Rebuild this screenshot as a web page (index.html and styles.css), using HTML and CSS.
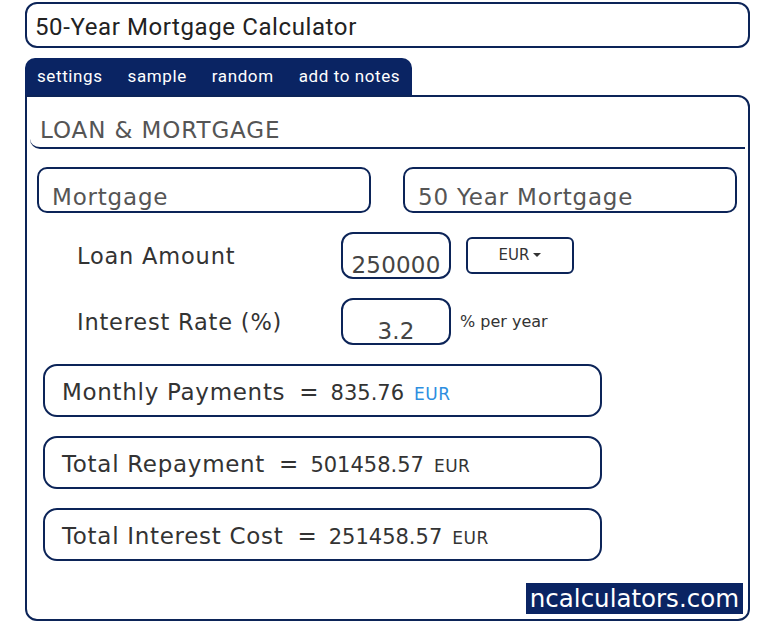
FILE: index.html
```html
<!DOCTYPE html>
<html>
<head>
  <meta charset="utf-8">
  <title>50-Year Mortgage Calculator</title>
  <link rel="stylesheet" href="styles.css">
</head>
<body>
  <div class="wrap">
    <div class="title">50-Year Mortgage Calculator</div>

    <div class="tabs">
      <span class="tab">settings</span>
      <span class="tab">sample</span>
      <span class="tab">random</span>
      <span class="tab">add to notes</span>
    </div>

    <div class="panel">
      <div class="heading">LOAN &amp; MORTGAGE</div>

      <div class="pick-row">
        <div class="pick">Mortgage</div>
        <div class="pick">50 Year Mortgage</div>
      </div>

      <div class="field">
        <div class="label">Loan Amount</div>
        <div class="input">250000</div>
        <div class="currency">EUR<span class="caret"></span></div>
      </div>

      <div class="field">
        <div class="label">Interest Rate (%)</div>
        <div class="input">3.2</div>
        <div class="unit">% per year</div>
      </div>

      <div class="result">
        <span>Monthly Payments</span><span class="eq">=</span><span class="val">835.76</span><span class="cur blue">EUR</span>
      </div>
      <div class="result">
        <span>Total Repayment</span><span class="eq">=</span><span class="val">501458.57</span><span class="cur">EUR</span>
      </div>
      <div class="result">
        <span>Total Interest Cost</span><span class="eq">=</span><span class="val">251458.57</span><span class="cur">EUR</span>
      </div>

      <div class="brand-row">
        <span class="brand">ncalculators.com</span>
      </div>
    </div>
  </div>
</body>
</html>
```

FILE: styles.css
```css
* {
  box-sizing: border-box;
}

body {
  margin: 0;
  background: #fff;
  font-family: "DejaVu Sans", Arial, sans-serif;
  color: #333;
}

.wrap {
  padding: 2px 20px 0 25px;
}

.title {
  height: 46px;
  border: 2px solid #0c2458;
  border-radius: 12px;
  padding: 0 8px;
  font-family: Roboto, Arial, sans-serif;
  font-size: 24px;
  letter-spacing: 0.6px;
  line-height: 46px;
  color: #222;
}

.tabs {
  display: inline-flex;
  margin-top: 10px;
  padding: 0 0 0 12px;
  height: 37px;
  background: #0a2463;
  border-radius: 10px 10px 0 0;
  font-family: Roboto, Arial, sans-serif;
  vertical-align: top;
}

.tab {
  color: #fff;
  font-size: 17px;
  letter-spacing: 0.6px;
  line-height: 37px;
  margin-right: 25px;
}

.tab:last-child {
  margin-right: 12px;
}

.panel {
  height: 526px;
  border: 2px solid #0c2458;
  border-radius: 0 12px 12px 12px;
}

.heading {
  margin: 0 3px;
  padding: 19px 0 2px 10px;
  height: 52px;
  font-size: 23px;
  letter-spacing: 0.9px;
  color: #555;
  line-height: 28px;
  border-bottom: 2px solid #0c2458;
  border-radius: 0 0 0 10px;
}

.pick-row {
  display: flex;
  gap: 32px;
  margin: 18px 11px 0 10px;
}

.pick {
  flex: 1;
  height: 46px;
  border: 2px solid #0c2458;
  border-radius: 10px;
  padding: 0 13px;
  font-size: 23px;
  letter-spacing: 0.8px;
  color: #555;
  line-height: 56px;
  overflow: hidden;
}

.field {
  display: flex;
  align-items: center;
  margin-top: 19px;
}

.label {
  width: 314px;
  padding-left: 50px;
  font-size: 22.5px;
  letter-spacing: 0.8px;
  color: #333;
}

.input {
  width: 110px;
  height: 47px;
  border: 2px solid #0c2458;
  border-radius: 12px;
  font-size: 23px;
  letter-spacing: 0.2px;
  color: #444;
  text-align: center;
  line-height: 62px;
  overflow: hidden;
}

.currency {
  margin-left: 15px;
  width: 108px;
  height: 37px;
  border: 2px solid #0c2458;
  border-radius: 6px;
  font-size: 15px;
  color: #333;
  text-align: center;
  line-height: 33px;
}

.caret {
  display: inline-block;
  margin-left: 4px;
  vertical-align: 3px;
  border-left: 4px solid transparent;
  border-right: 4px solid transparent;
  border-top: 4px solid #333;
}

.unit {
  margin-left: 9px;
  font-size: 16px;
  color: #333;
}

.result {
  display: flex;
  align-items: baseline;
  margin: 19px 146px 0 16px;
  height: 53px;
  border: 2px solid #0c2458;
  border-radius: 14px;
  padding: 0 17px;
  font-size: 23px;
  letter-spacing: 0.7px;
  line-height: 52px;
  color: #333;
}

.eq {
  margin: 0 12px 0 14px;
  letter-spacing: 0;
}

.val {
  font-size: 21px;
  letter-spacing: 0;
}

.cur {
  margin-left: 10px;
  font-size: 17px;
  letter-spacing: 0.5px;
  color: #333;
}

.cur.blue {
  color: #2d8ee0;
}

.brand-row {
  display: flex;
  justify-content: flex-end;
  margin: 22px 5px 0 0;
}

.brand {
  background: #0a2463;
  color: #fff;
  font-size: 24.5px;
  line-height: 31px;
  padding: 0 4px;
}
```
